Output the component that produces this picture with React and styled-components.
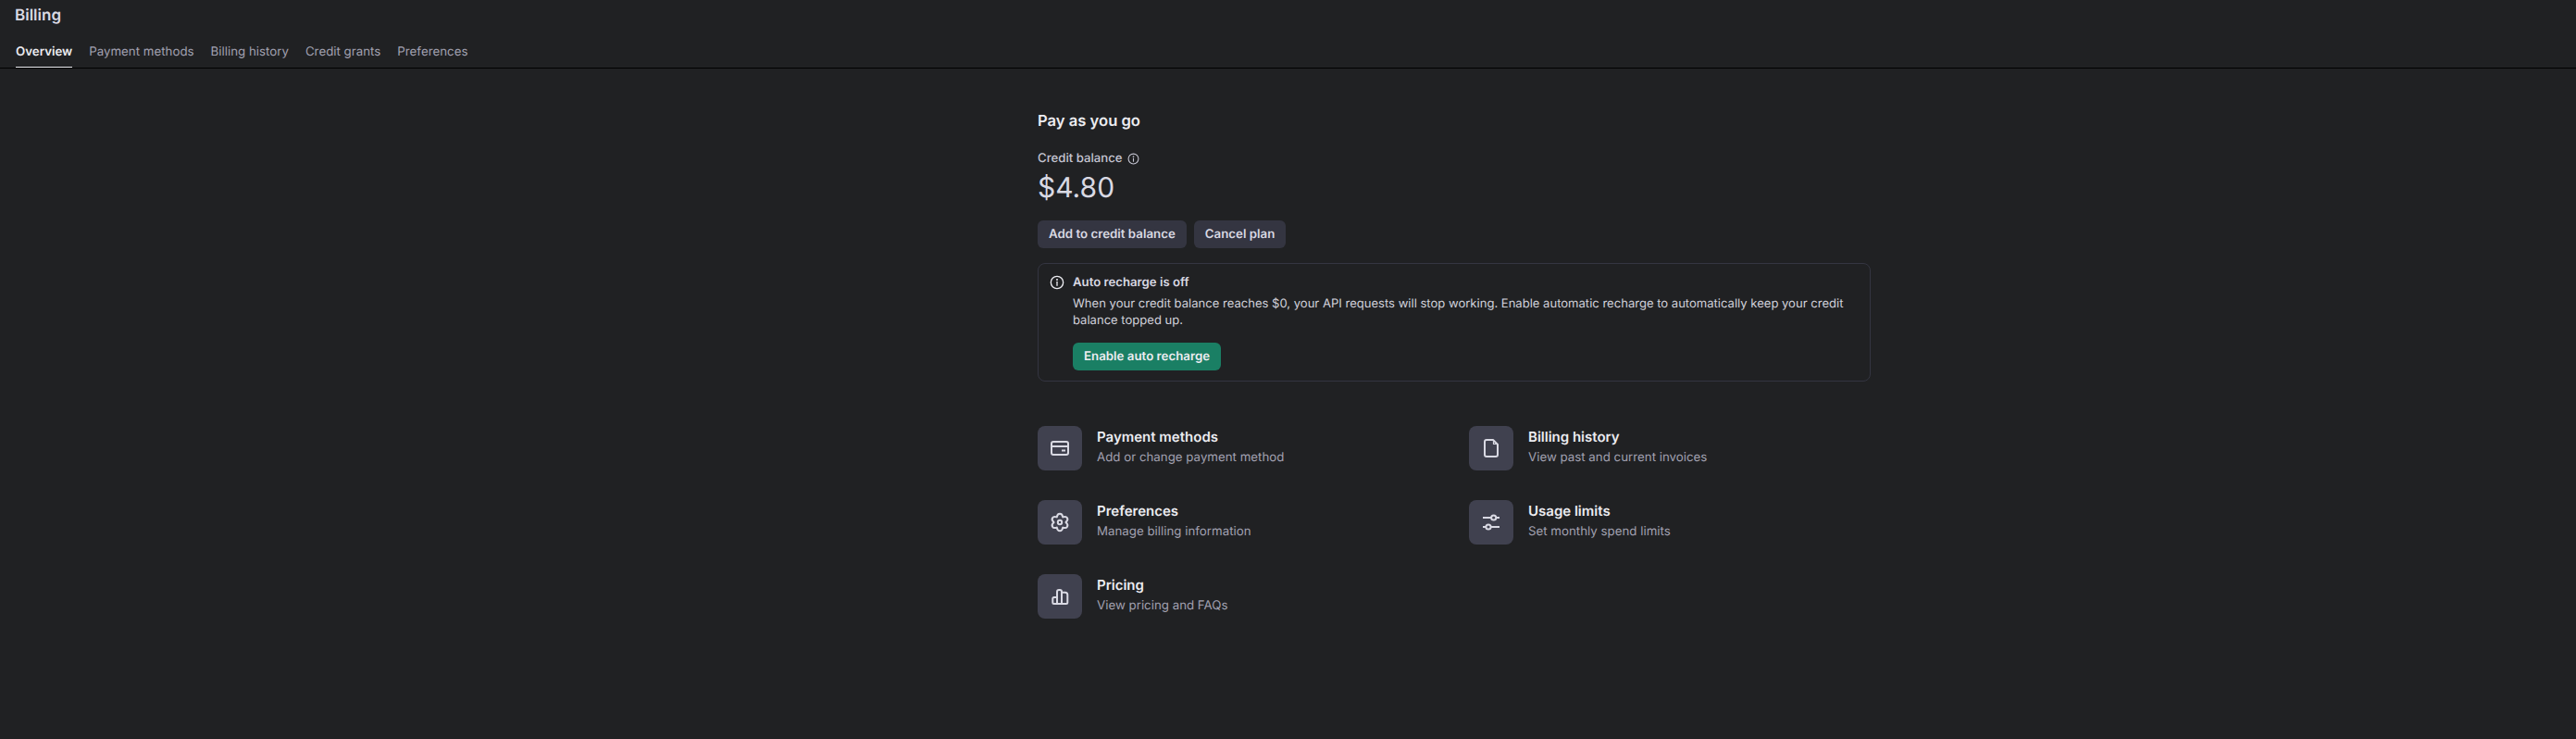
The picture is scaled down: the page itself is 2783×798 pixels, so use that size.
import styled, { createGlobalStyle } from "styled-components";

const GlobalStyle = createGlobalStyle`
    html, body {
        margin: 0;
        background: #202123;
        font-family: Inter, "Liberation Sans", sans-serif;
        text-rendering: geometricPrecision;
    }
`;

const tabs = ["Overview", "Payment methods", "Billing history", "Credit grants", "Preferences"];

const CardIcon = () => (
    <svg width="24" height="24" viewBox="0 0 24 24" fill="none" stroke="currentColor" strokeWidth="2" strokeLinejoin="round">
        <rect x="3" y="5" width="18" height="14" rx="2" />
        <path d="M3 10h18" />
        <path d="M14 14.500h4" />
    </svg>
);

const FileIcon = () => (
    <svg width="24" height="24" viewBox="0 0 24 24" fill="none" stroke="currentColor" strokeWidth="2" strokeLinejoin="round">
        <path d="M7 3h7l5 5v11a2 2 0 0 1-2 2H7a2 2 0 0 1-2-2V5a2 2 0 0 1 2-2z" />
        <path d="M14.500 4.500v3h3" strokeWidth="1.200" />
    </svg>
);

const GearIcon = () => (
    <svg width="24" height="24" viewBox="0 0 24 24" fill="none" stroke="currentColor" strokeWidth="2" strokeLinejoin="round">
        <path d="M8.800 6.400C9.500 1.600 14.500 1.600 15.200 6.400C19.800 4.600 22.300 8.900 18.400 12C22.300 15.100 19.800 19.400 15.200 17.600C14.500 22.400 9.500 22.400 8.800 17.600C4.200 19.400 1.700 15.100 5.600 12C1.700 8.900 4.200 4.600 8.800 6.400z" />
        <circle cx="12" cy="12" r="2.200" />
    </svg>
);

const SlidersIcon = () => (
    <svg width="24" height="24" viewBox="0 0 24 24" fill="none" stroke="currentColor" strokeWidth="2">
        <path d="M3 7h9M17.500 7H21M3 17h3.500M11.500 17H21" />
        <circle cx="14.700" cy="7" r="2.600" />
        <circle cx="9" cy="17" r="2.600" />
    </svg>
);

const ChartIcon = () => (
    <svg width="24" height="24" viewBox="0 0 24 24" fill="none" stroke="currentColor" strokeWidth="2" strokeLinejoin="round">
        <path d="M4.300 14.500a1.500 1.500 0 0 1 1.500-1.500H9v7H5.800a1.500 1.500 0 0 1-1.500-1.500z" />
        <path d="M9 7a2 2 0 0 1 2-2h1a2 2 0 0 1 2 2v13H9z" />
        <path d="M14 7.700h3.800a2.500 2.500 0 0 1 2.500 2.500v8.300a1.500 1.500 0 0 1-1.500 1.500H14z" />
    </svg>
);

const InfoIcon = ({ size }) => (
    <svg width={size} height={size} viewBox="0 0 24 24" fill="none" stroke="currentColor" strokeWidth="2" strokeLinecap="round">
        <circle cx="12" cy="12" r="10" />
        <path d="M12 11v6" />
        <circle cx="12" cy="7.500" r="0.600" />
    </svg>
);

const links = [
    { icon: <CardIcon />, title: "Payment methods", text: "Add or change payment method" },
    { icon: <FileIcon />, title: "Billing history", text: "View past and current invoices" },
    { icon: <GearIcon />, title: "Preferences", text: "Manage billing information" },
    { icon: <SlidersIcon />, title: "Usage limits", text: "Set monthly spend limits" },
    { icon: <ChartIcon />, title: "Pricing", text: "View pricing and FAQs" },
];

function App() {
    return (
        <Page>
            <GlobalStyle />
            <Header>
                <Title>Billing</Title>
                <TabBar>
                    {tabs.map((tab, i) => (
                        <Tab key={tab} $active={i === 0}>{tab}</Tab>
                    ))}
                </TabBar>
            </Header>

            <Main>
                <PlanName>Pay as you go</PlanName>
                <BalanceLabel>
                    Credit balance
                    <InfoIcon size={13} />
                </BalanceLabel>
                <Balance>$4.80</Balance>
                <ButtonRow>
                    <Button>Add to credit balance</Button>
                    <Button>Cancel plan</Button>
                </ButtonRow>

                <Notice>
                    <NoticeIcon><InfoIcon size={16} /></NoticeIcon>
                    <div>
                        <NoticeTitle>Auto recharge is off</NoticeTitle>
                        <NoticeText>
                            When your credit balance reaches $0, your API requests will stop working. Enable automatic
                            recharge to automatically keep your credit balance topped up.
                        </NoticeText>
                        <GreenButton>Enable auto recharge</GreenButton>
                    </div>
                </Notice>

                <LinkGrid>
                    {links.map((link) => (
                        <LinkItem key={link.title}>
                            <IconBox>{link.icon}</IconBox>
                            <div>
                                <LinkTitle>{link.title}</LinkTitle>
                                <LinkText>{link.text}</LinkText>
                            </div>
                        </LinkItem>
                    ))}
                </LinkGrid>
            </Main>
        </Page>
    );
}

const Page = styled.div`
    min-height: 798px;
    background: #202123;
    color: #ececf1;
`;

const Header = styled.header`
    border-bottom: 1px solid #000;
    padding: 0 17px;
    height: 74px;
    box-sizing: border-box;
    display: flex;
    flex-direction: column;
`;

const Title = styled.h1`
    margin: 5px 0 0 -1px;
    font-size: 17px;
    line-height: 24px;
    font-weight: 600;
    color: #d9d9e3;
`;

const TabBar = styled.nav`
    display: flex;
    gap: 18px;
    margin-top: auto;
`;

const Tab = styled.div`
    font-size: 13.300px;
    line-height: 20px;
    padding-bottom: 7px;
    font-weight: ${(p) => (p.$active ? 600 : 400)};
    color: ${(p) => (p.$active ? "#ececf1" : "#a0a0b0")};
    box-shadow: ${(p) => (p.$active ? "inset 0 -1px 0 #ececf1" : "none")};
`;

const Main = styled.main`
    width: 900px;
    margin-left: 1121px;
    padding-top: 45px;
`;

const PlanName = styled.h2`
    margin: 0;
    font-size: 16.600px;
    line-height: 24px;
    font-weight: 600;
    color: #ececf1;
`;

const BalanceLabel = styled.div`
    display: flex;
    align-items: center;
    gap: 5px;
    margin-top: 18px;
    font-size: 13.200px;
    line-height: 20px;
    font-weight: 500;
    color: #c5c5d2;
`;

const Balance = styled.div`
    font-size: 30px;
    line-height: 40px;
    color: #d9d9e3;
    margin-top: 2px;
`;

const ButtonRow = styled.div`
    display: flex;
    gap: 8px;
    margin-top: 15px;
`;

const Button = styled.button`
    height: 30px;
    padding: 0 12px;
    border: none;
    border-radius: 6px;
    background: #343541;
    color: #d9d9e3;
    font: 600 13.300px/20px Inter, "Liberation Sans", sans-serif;
    text-rendering: geometricPrecision;
`;

const Notice = styled.section`
    display: flex;
    gap: 9px;
    margin-top: 16px;
    padding: 10px 14px 0 12px;
    height: 128px;
    box-sizing: border-box;
    border: 1px solid #343541;
    border-radius: 8px;
`;

const NoticeIcon = styled.div`
    height: 20px;
    display: flex;
    align-items: center;
    color: #ececf1;
`;

const NoticeTitle = styled.div`
    font-size: 13.200px;
    line-height: 20px;
    font-weight: 600;
    color: #d9d9e3;
`;

const NoticeText = styled.p`
    margin: 4px 0 0;
    font-size: 13.050px;
    line-height: 18px;
    color: #d1d1db;
`;

const GreenButton = styled(Button)`
    display: block;
    margin-top: 15px;
    background: #1a7f64;
    color: #ececf1;
`;

const LinkGrid = styled.div`
    display: grid;
    grid-template-columns: 1fr 1fr;
    gap: 32px;
    margin-top: 48px;
`;

const LinkItem = styled.div`
    display: flex;
    gap: 16px;
`;

const IconBox = styled.div`
    width: 48px;
    height: 48px;
    border-radius: 8px;
    background: #40414f;
    color: #d9d9e3;
    display: flex;
    align-items: center;
    justify-content: center;
`;

const LinkTitle = styled.div`
    font-size: 15px;
    line-height: 24px;
    font-weight: 600;
    color: #ececf1;
`;

const LinkText = styled.div`
    font-size: 13.300px;
    line-height: 21px;
    color: #a0a0b0;
`;

export default App;
